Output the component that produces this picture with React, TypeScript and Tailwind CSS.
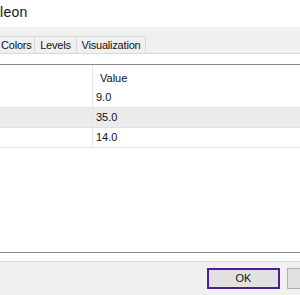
export default function App(): React.ReactElement {
  const rows = [
    { value: '9.0', shaded: false },
    { value: '35.0', shaded: true },
    { value: '14.0', shaded: false }
  ]

  return (
    <div className="w-[300px] h-[295px] overflow-hidden bg-[#f0f0f0] text-[11px] text-[#111] font-['Liberation_Sans',Arial,sans-serif] flex flex-col">
      {/* title bar */}
      <div className="h-[27px] bg-white flex items-center shrink-0">
        <span className="text-[14px] leading-none -mt-[3px] tracking-[0.3px]">leon</span>
      </div>

      {/* tab strip */}
      <div className="h-[26px] flex items-end shrink-0 pt-[9px] tracking-[-0.2px]">
        <div className="h-[17px] w-[35px] border border-l-0 border-b-0 border-[#d9d9d9] flex items-center pl-[1px]">
          Colors
        </div>
        <div className="h-[17px] w-[42px] border border-l-0 border-b-0 border-[#d9d9d9] flex items-center justify-center">
          Levels
        </div>
        <div className="h-[17px] w-[69px] border border-l-0 border-b-0 border-[#d9d9d9] flex items-center justify-center">
          Visualization
        </div>
      </div>

      {/* tab page */}
      <div className="h-[208px] shrink-0 bg-white border-t border-[#d9d9d9] pt-[10px] pb-[8px] flex flex-col">
        <div className="flex-1 border-t border-b border-[#8a8a8a] bg-white">
          <div className="flex h-[23px] items-center">
            <div className="w-[93px] h-full border-r border-[#e5e5e5]" />
            <div className="pl-[7px] pt-[4px]">Value</div>
          </div>
          {rows.map((r) => (
            <div
              key={r.value}
              className={`flex h-[20px] items-center border-b border-[#e3e3e3] ${r.shaded ? 'bg-[#ebebeb]' : 'bg-white'}`}
            >
              <div className="w-[93px] h-full border-r border-[#e5e5e5]" />
              <div className="pl-[3px]">{r.value}</div>
            </div>
          ))}
        </div>
      </div>

      {/* button bar */}
      <div className="flex-1 border-t border-[#dadada] flex items-start justify-end pt-[6px] gap-[7px] -mr-[20px]">
        <button className="w-[73px] h-[21px] border-2 border-[#4b1e9c] bg-[#e1e1e1] flex items-center justify-center">
          OK
        </button>
        <button className="w-[33px] h-[21px] border border-[#adadad] bg-[#e1e1e1]" />
      </div>
    </div>
  )
}
